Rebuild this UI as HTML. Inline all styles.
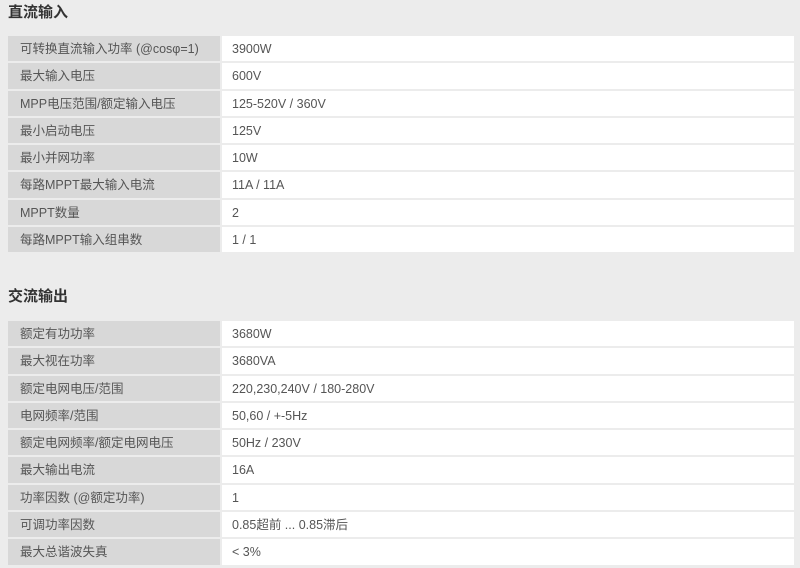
<!DOCTYPE html>
<html><head><meta charset="utf-8"><style>
body{margin:0;background:#ececec;font-family:"Liberation Sans","Noto Sans CJK SC",sans-serif;width:800px;height:568px;overflow:hidden;position:relative}
h2{position:absolute;left:8px;margin:0;font-size:15px;font-weight:bold;color:#333;line-height:20px}
.t{position:absolute;left:8px;width:786px}
.r{display:flex;height:25.3px;margin-bottom:2px}
.l{width:212px;background:#d8d8d8;color:#555;font-size:12.5px;line-height:26px;padding-left:12px;box-sizing:border-box}
.v{flex:1;margin-left:2px;background:#fff;color:#555;font-size:12.5px;line-height:26px;padding-left:10px}
</style></head><body>
<h2 style="top:3px">直流输入</h2>
<div class="t" style="top:36px">
<div class="r"><div class="l">可转换直流输入功率 (@cosφ=1)</div><div class="v">3900W</div></div>
<div class="r"><div class="l">最大输入电压</div><div class="v">600V</div></div>
<div class="r"><div class="l">MPP电压范围/额定输入电压</div><div class="v">125-520V / 360V</div></div>
<div class="r"><div class="l">最小启动电压</div><div class="v">125V</div></div>
<div class="r"><div class="l">最小并网功率</div><div class="v">10W</div></div>
<div class="r"><div class="l">每路MPPT最大输入电流</div><div class="v">11A / 11A</div></div>
<div class="r"><div class="l">MPPT数量</div><div class="v">2</div></div>
<div class="r"><div class="l">每路MPPT输入组串数</div><div class="v">1 / 1</div></div>
</div>
<h2 style="top:287px">交流输出</h2>
<div class="t" style="top:321px">
<div class="r"><div class="l">额定有功功率</div><div class="v">3680W</div></div>
<div class="r"><div class="l">最大视在功率</div><div class="v">3680VA</div></div>
<div class="r"><div class="l">额定电网电压/范围</div><div class="v">220,230,240V / 180-280V</div></div>
<div class="r"><div class="l">电网频率/范围</div><div class="v">50,60 / +-5Hz</div></div>
<div class="r"><div class="l">额定电网频率/额定电网电压</div><div class="v">50Hz / 230V</div></div>
<div class="r"><div class="l">最大输出电流</div><div class="v">16A</div></div>
<div class="r"><div class="l">功率因数 (@额定功率)</div><div class="v">1</div></div>
<div class="r"><div class="l">可调功率因数</div><div class="v">0.85超前 ... 0.85滞后</div></div>
<div class="r"><div class="l">最大总谐波失真</div><div class="v">&lt; 3%</div></div>
</div>
</body></html>
